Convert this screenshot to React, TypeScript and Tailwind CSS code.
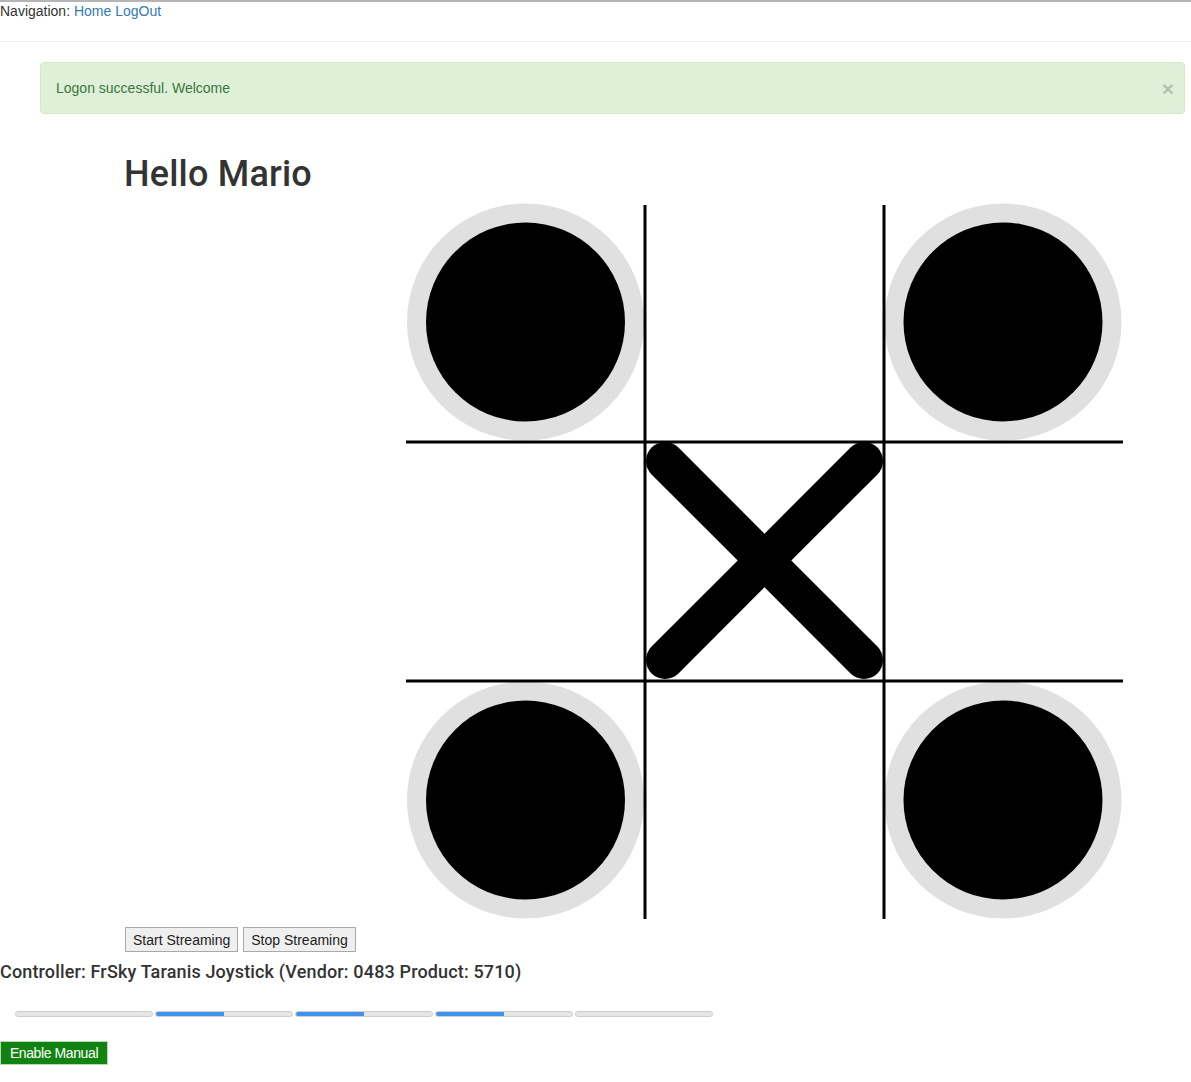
import React from 'react';

const font = { fontFamily: '"Liberation Sans", Arial, sans-serif' };
const headFont = { fontFamily: 'Roboto, "Liberation Sans", Arial, sans-serif' };

const Board: React.FC = () => {
  // board origin is (406, 203) on the page; cells are 239px
  const circles = [
    [119.5, 119],
    [597, 119],
    [119.5, 597],
    [597, 597],
  ];
  return (
    <svg width={718} height={718} viewBox="0 0 718 718" className="block">
      {circles.map(([cx, cy], i) => (
        <g key={i}>
          <circle cx={cx} cy={cy} r={118.5} fill="#e0e0e0" />
          <circle cx={cx} cy={cy} r={99.5} fill="#000" />
        </g>
      ))}
      <line x1={239} y1={2} x2={239} y2={716} stroke="#000" strokeWidth={3} />
      <line x1={478} y1={2} x2={478} y2={716} stroke="#000" strokeWidth={3} />
      <line x1={0} y1={239} x2={717} y2={239} stroke="#000" strokeWidth={3} />
      <line x1={0} y1={478} x2={717} y2={478} stroke="#000" strokeWidth={3} />
      <line x1={259} y1={258} x2={458} y2={457} stroke="#000" strokeWidth={38} strokeLinecap="round" />
      <line x1={458} y1={258} x2={259} y2={457} stroke="#000" strokeWidth={38} strokeLinecap="round" />
    </svg>
  );
};

const Progress: React.FC<{ value: number }> = ({ value }) => (
  <div className="w-[138px] h-[6px] rounded-full bg-[#e6e6e6] border border-[#cfcfcf] overflow-hidden">
    <div className="h-full bg-[#3f93ec]" style={{ width: `${value}%` }} />
  </div>
);

export default function App() {
  return (
    <div className="min-h-[1082px] bg-white text-[#333] text-[14px] leading-[20px] border-t-2 border-[#b5b5b5]" style={font}>
      {/* Navegación */}
      <div className="h-[19px] -mt-[1px]">
        Navigation: <a href="#" className="text-[#337ab7]">Home</a>{' '}
        <a href="#" className="text-[#337ab7]">LogOut</a>
      </div>
      <hr className="mt-[21px] mb-[20px] border-t border-[#eee]" />

      {/* Alerta */}
      <div className="ml-[40px] mr-[6px] h-[52px] rounded-[4px] bg-[#dff0d8] border border-[#d6e9c6] text-[#3c763d] flex items-center justify-between pl-[15px] pr-[10px]">
        <span>Logon successful. Welcome</span>
        <span className="text-[21px] font-bold text-black opacity-20 leading-none">×</span>
      </div>

      <div className="pl-[124px]">
        <h1 className="text-[36px] leading-[40px] mt-[40px] font-medium tracking-[0.2px]" style={headFont}>
          Hello Mario
        </h1>
        <div className="ml-[282px] mt-[9px]">
          <Board />
        </div>
        <div className="flex gap-[5px] mt-[6px] pl-[1px]">
          <button className="h-[25px] px-[7px] bg-[#efefef] border border-[#a9a9a9] text-[14px] text-[#222]">
            Start Streaming
          </button>
          <button className="h-[25px] px-[7px] bg-[#efefef] border border-[#a9a9a9] text-[14px] text-[#222]">
            Stop Streaming
          </button>
        </div>
      </div>

      <h4 className="text-[18px] leading-[20px] mt-[10px] font-medium tracking-[0.15px]" style={headFont}>
        Controller: FrSky Taranis Joystick (Vendor: 0483 Product: 5710)
      </h4>

      <div className="flex gap-[2px] pl-[15px] mt-[29px]">
        <Progress value={0} />
        <Progress value={50} />
        <Progress value={50} />
        <Progress value={50} />
        <Progress value={0} />
      </div>

      <button className="mt-[24px] h-[24px] w-[108px] bg-[#128312] border border-[#b9d6b9] text-white text-[14px] tracking-[-0.4px]">
        Enable Manual
      </button>
    </div>
  );
}
